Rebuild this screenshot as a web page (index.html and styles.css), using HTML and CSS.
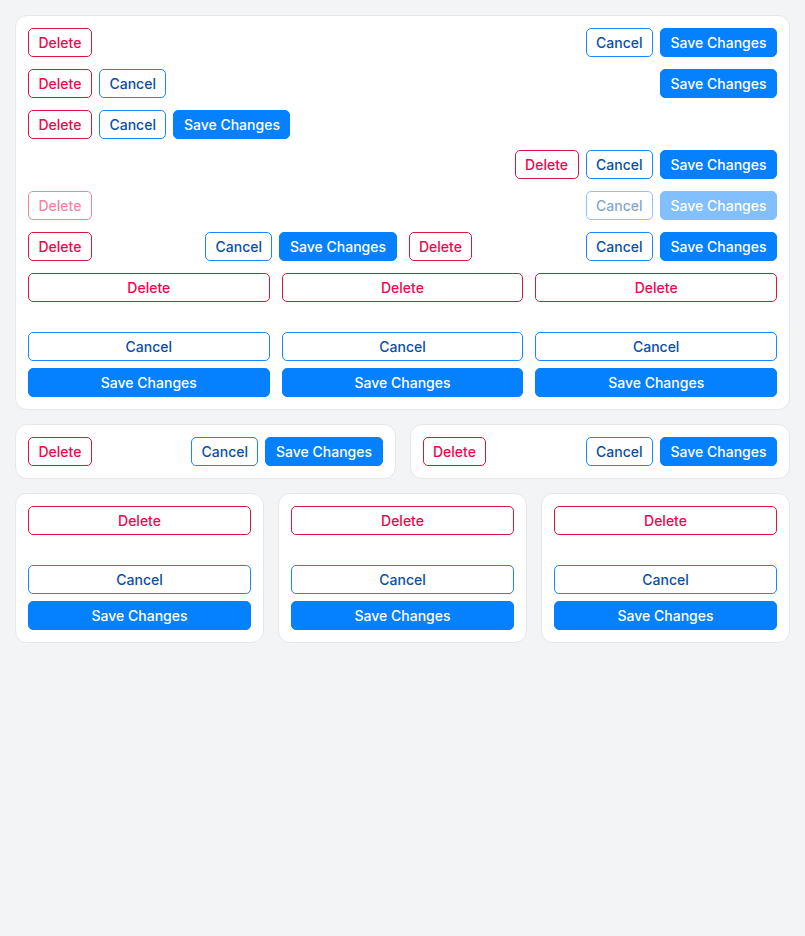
FILE: index.html
```html
<!DOCTYPE html>
<html>
	<head>
		<meta charset="UTF-8">
		<title>Buttons</title>
		<link rel="stylesheet" href="styles.css">
	</head>

	<body>
		<div id="wrap">
			<div class="card main">
				<div class="row">
					<button class="btn del">Delete</button>
					<span class="fill"></span>
					<button class="btn cancel">Cancel</button>
					<button class="btn save">Save Changes</button>
				</div>
				<div class="row">
					<button class="btn del">Delete</button>
					<button class="btn cancel">Cancel</button>
					<span class="fill"></span>
					<button class="btn save">Save Changes</button>
				</div>
				<div class="row">
					<button class="btn del">Delete</button>
					<button class="btn cancel">Cancel</button>
					<button class="btn save">Save Changes</button>
				</div>
				<div class="row">
					<span class="fill"></span>
					<button class="btn del">Delete</button>
					<button class="btn cancel">Cancel</button>
					<button class="btn save">Save Changes</button>
				</div>
				<div class="row off">
					<button class="btn del" disabled>Delete</button>
					<span class="fill"></span>
					<button class="btn cancel" disabled>Cancel</button>
					<button class="btn save" disabled>Save Changes</button>
				</div>
				<div class="halves">
					<div class="row">
						<button class="btn del">Delete</button>
						<span class="fill"></span>
						<button class="btn cancel">Cancel</button>
						<button class="btn save">Save Changes</button>
					</div>
					<div class="row">
						<button class="btn del">Delete</button>
						<span class="fill"></span>
						<button class="btn cancel">Cancel</button>
						<button class="btn save">Save Changes</button>
					</div>
				</div>
				<div class="thirds">
					<div class="stack">
						<button class="btn del">Delete</button>
						<button class="btn cancel">Cancel</button>
						<button class="btn save">Save Changes</button>
					</div>
					<div class="stack">
						<button class="btn del">Delete</button>
						<button class="btn cancel">Cancel</button>
						<button class="btn save">Save Changes</button>
					</div>
					<div class="stack">
						<button class="btn del">Delete</button>
						<button class="btn cancel">Cancel</button>
						<button class="btn save">Save Changes</button>
					</div>
				</div>
			</div>

			<div class="pair">
				<div class="card">
					<div class="row">
						<button class="btn del">Delete</button>
						<span class="fill"></span>
						<button class="btn cancel">Cancel</button>
						<button class="btn save">Save Changes</button>
					</div>
				</div>
				<div class="card">
					<div class="row">
						<button class="btn del">Delete</button>
						<span class="fill"></span>
						<button class="btn cancel">Cancel</button>
						<button class="btn save">Save Changes</button>
					</div>
				</div>
			</div>

			<div class="triple">
				<div class="card">
					<div class="stack">
						<button class="btn del">Delete</button>
						<button class="btn cancel">Cancel</button>
						<button class="btn save">Save Changes</button>
					</div>
				</div>
				<div class="card">
					<div class="stack">
						<button class="btn del">Delete</button>
						<button class="btn cancel">Cancel</button>
						<button class="btn save">Save Changes</button>
					</div>
				</div>
				<div class="card">
					<div class="stack">
						<button class="btn del">Delete</button>
						<button class="btn cancel">Cancel</button>
						<button class="btn save">Save Changes</button>
					</div>
				</div>
			</div>
		</div>
	</body>

</html>
```

FILE: styles.css
```css
body {
	margin: 0;
	padding: 0;
	background: #f3f4f6;
	font-family: Inter, "Noto Sans", "Liberation Sans", sans-serif;
}

#wrap {
	padding: 15px;
	display: flex;
	flex-direction: column;
	gap: 14px;
}

.card {
	background: #fff;
	border: 1px solid #e5e7eb;
	border-radius: 12px;
	padding: 12px;
}

.main {
	display: flex;
	flex-direction: column;
	gap: 11.8px;
}

.row {
	display: flex;
	align-items: center;
	gap: 7px;
}

.fill {
	flex: 1;
}

.halves {
	display: grid;
	grid-template-columns: 1fr 1fr;
	gap: 12px;
}

.thirds {
	display: grid;
	grid-template-columns: 1fr 1fr 1fr;
	gap: 12px;
}

.stack {
	display: flex;
	flex-direction: column;
	gap: 7px;
}

.stack .del {
	margin-bottom: 23px;
}

.pair {
	display: grid;
	grid-template-columns: 1fr 1fr;
	gap: 14px;
}

.triple {
	display: grid;
	grid-template-columns: 1fr 1fr 1fr;
	gap: 14px;
}

.btn {
	height: 29px;
	padding: 0 9.5px;
	border-radius: 5px;
	border: 1px solid transparent;
	background: #fff;
	font-family: Inter, "Noto Sans", "Liberation Sans", sans-serif;
	font-size: 14px;
	font-weight: 500;
	line-height: 27px;
	white-space: nowrap;
	cursor: pointer;
}

.btn.del {
	color: #f0064e;
	border-color: #d41a3c;
}

.btn.cancel {
	color: #0a4fa3;
	border-color: #1a86ff;
}

.btn.save {
	color: #fff;
	background: #0580ff;
	border-color: #0580ff;
}

.btn:disabled {
	opacity: 0.5;
	cursor: default;
}
```
